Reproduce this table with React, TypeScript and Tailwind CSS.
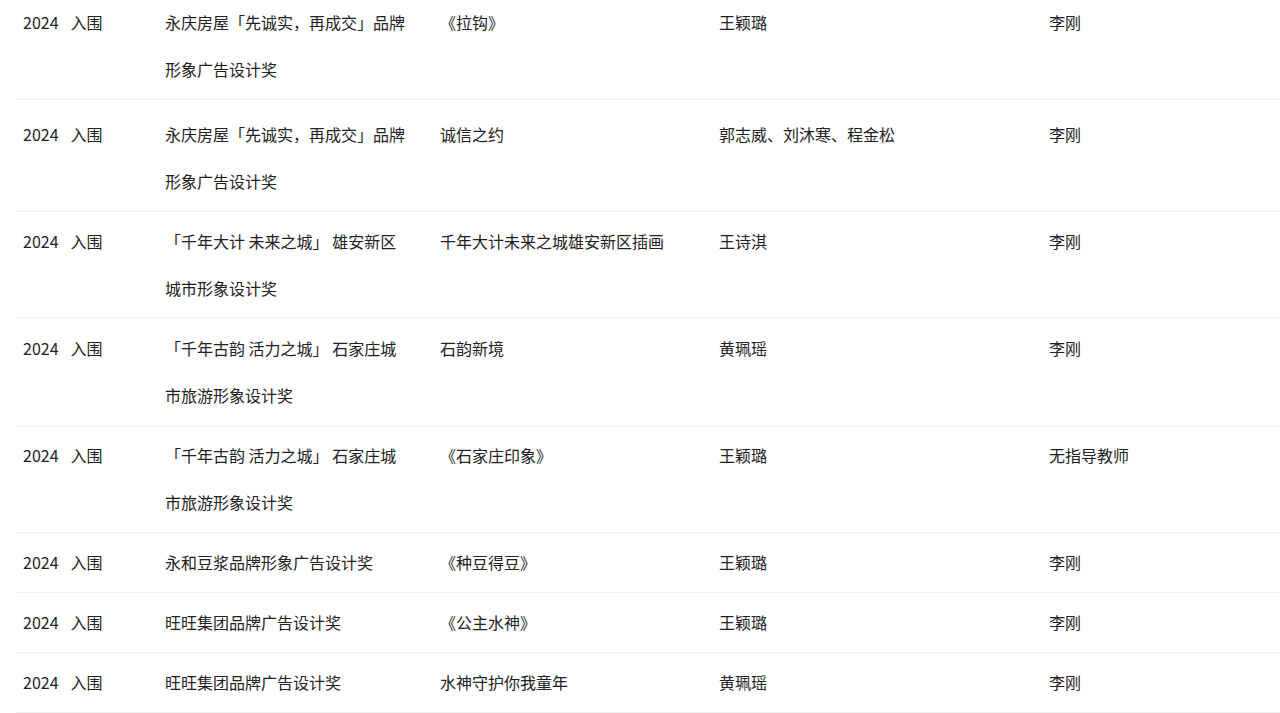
import React from 'react';

type Row = {
  year: string;
  status: string;
  award: string;
  work: string;
  author: string;
  teacher: string;
  pad: string;
};

const rows: Row[] = [
  { year: '2024', status: '入围', award: '永庆房屋「先诚实，再成交」品牌形象广告设计奖', work: '《拉钩》', author: '王颖璐', teacher: '李刚', pad: 'pt-0 pb-[6px]' },
  { year: '2024', status: '入围', award: '永庆房屋「先诚实，再成交」品牌形象广告设计奖', work: '诚信之约', author: '郭志威、刘沐寒、程金松', teacher: '李刚', pad: 'pt-[11px] pb-[6px]' },
  { year: '2024', status: '入围', award: '「千年大计 未来之城」 雄安新区城市形象设计奖', work: '千年大计未来之城雄安新区插画', author: '王诗淇', teacher: '李刚', pad: 'py-[6px]' },
  { year: '2024', status: '入围', award: '「千年古韵 活力之城」 石家庄城市旅游形象设计奖', work: '石韵新境', author: '黄珮瑶', teacher: '李刚', pad: 'py-[6px]' },
  { year: '2024', status: '入围', award: '「千年古韵 活力之城」 石家庄城市旅游形象设计奖', work: '《石家庄印象》', author: '王颖璐', teacher: '无指导教师', pad: 'py-[6px]' },
  { year: '2024', status: '入围', award: '永和豆浆品牌形象广告设计奖', work: '《种豆得豆》', author: '王颖璐', teacher: '李刚', pad: 'py-[6px]' },
  { year: '2024', status: '入围', award: '旺旺集团品牌广告设计奖', work: '《公主水神》', author: '王颖璐', teacher: '李刚', pad: 'py-[6px]' },
  { year: '2024', status: '入围', award: '旺旺集团品牌广告设计奖', work: '水神守护你我童年', author: '黄珮瑶', teacher: '李刚', pad: 'py-[6px]' },
];

const App: React.FC = () => {
  return (
    <div className="min-h-screen bg-white overflow-hidden font-['Noto_Sans_CJK_SC','Noto_Sans',sans-serif] text-[16px] leading-[47px] text-[#222222]">
      <div className="ml-4 -mt-px">
        {rows.map((r, i) => (
          <div
            key={i}
            className={`grid grid-cols-[149px_275px_279px_330px_1fr] border-b border-[#eeeff1] ${r.pad}`}
          >
            <div className="pl-[7px] flex gap-[12px]">
              <span>{r.year}</span>
              <span>{r.status}</span>
            </div>
            <div className="w-[244px]">{r.award}</div>
            <div>{r.work}</div>
            <div>{r.author}</div>
            <div>{r.teacher}</div>
          </div>
        ))}
      </div>
    </div>
  );
};

export default App;
